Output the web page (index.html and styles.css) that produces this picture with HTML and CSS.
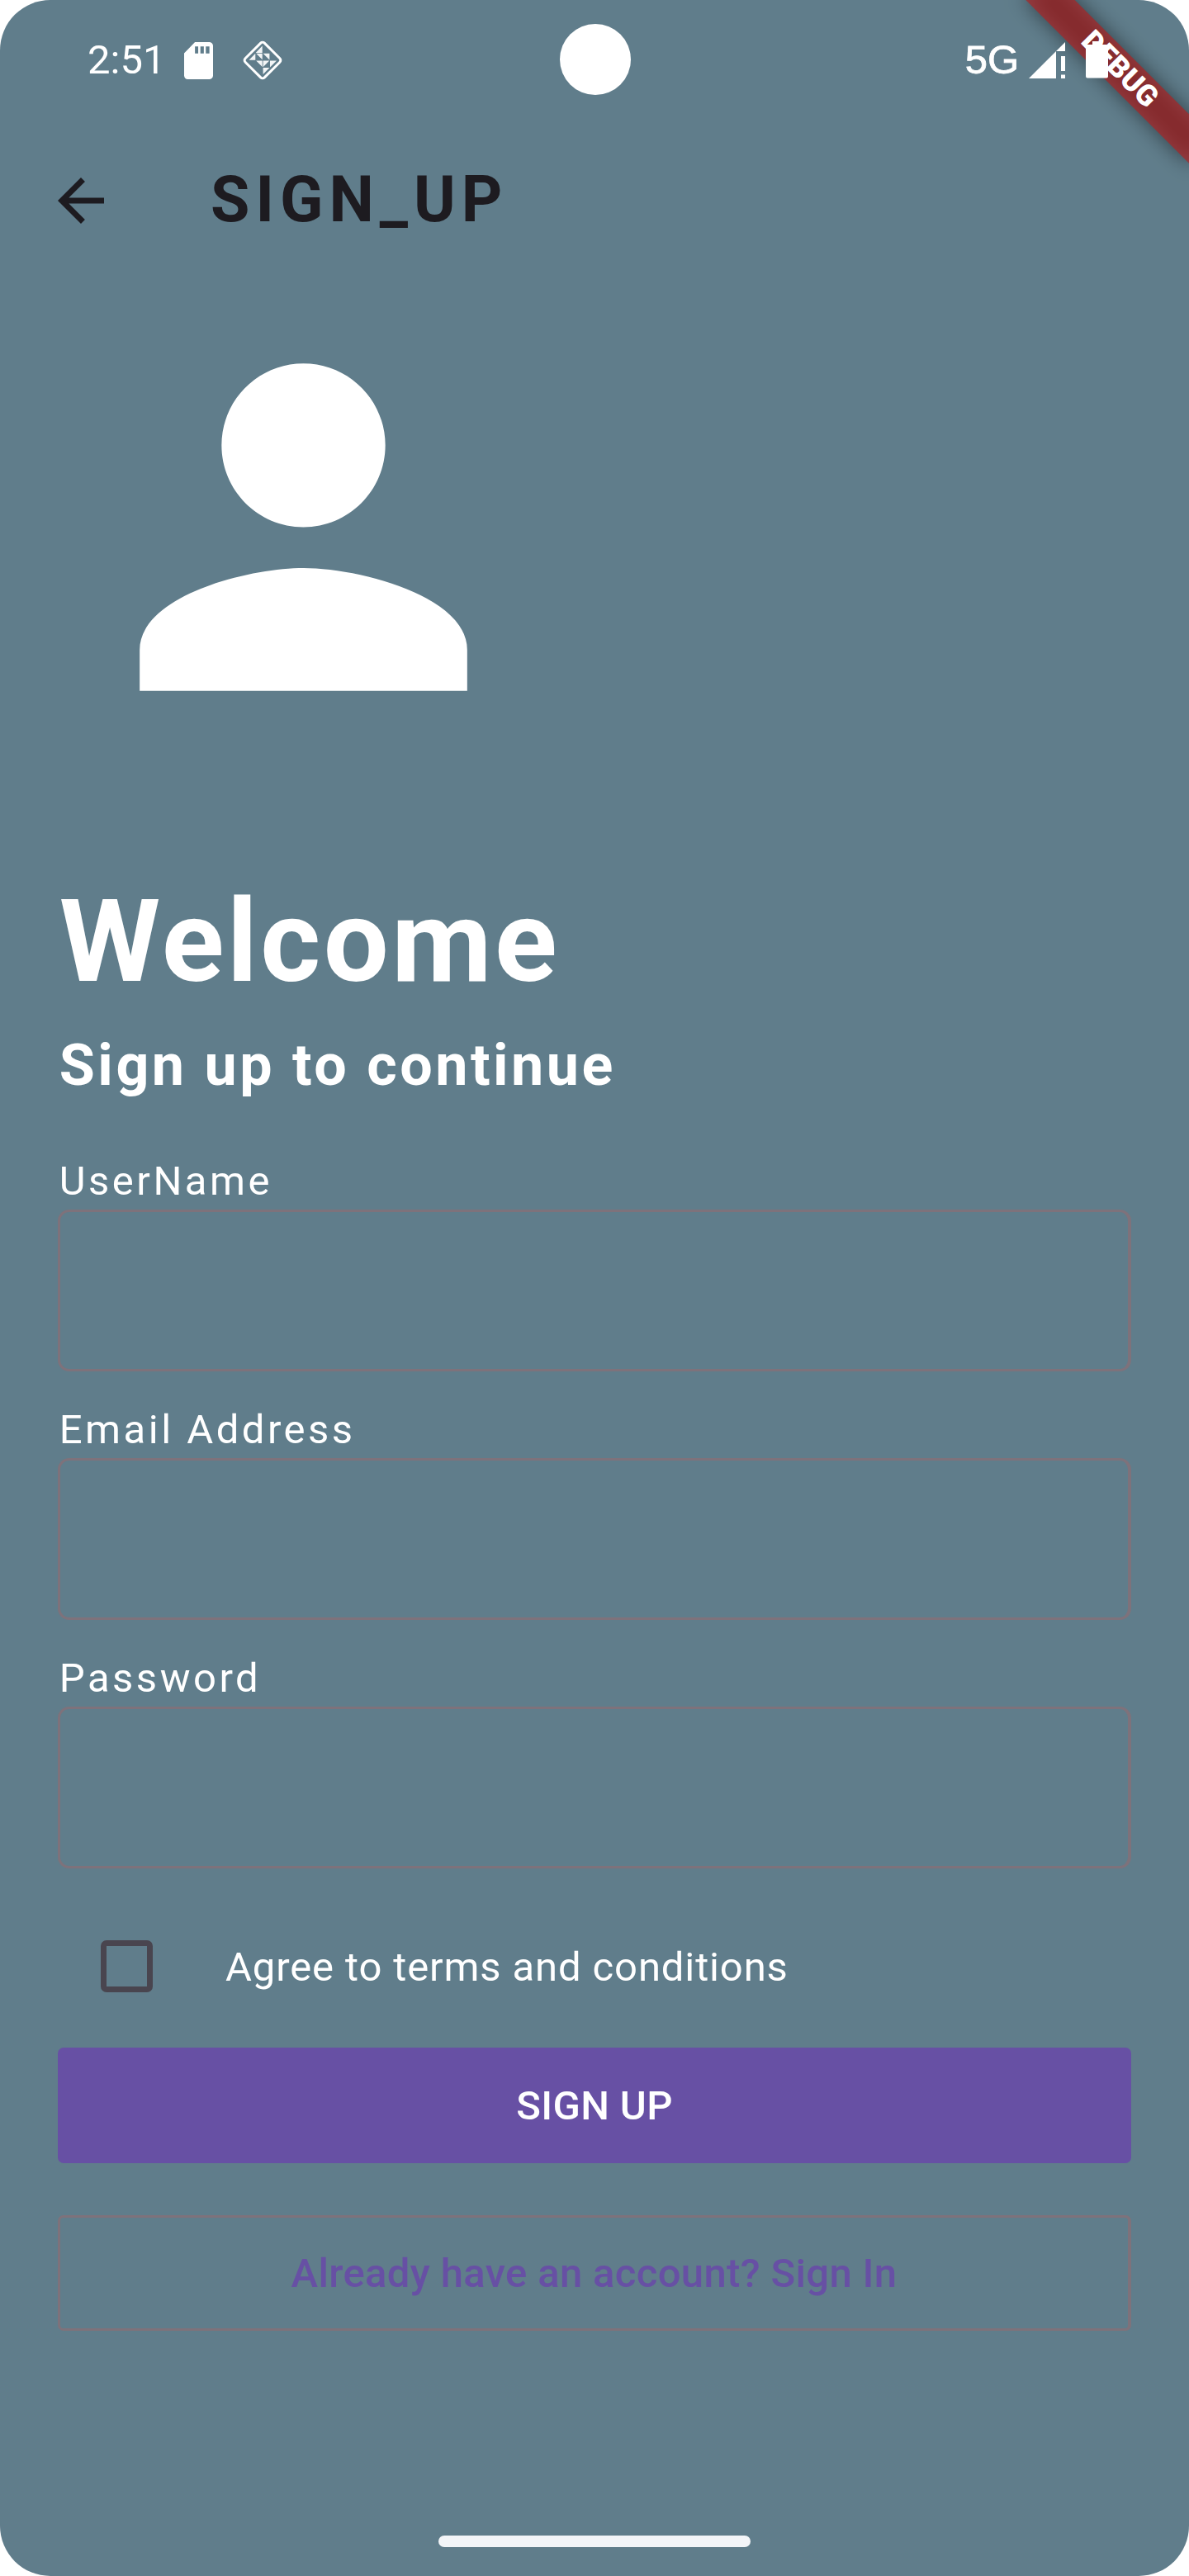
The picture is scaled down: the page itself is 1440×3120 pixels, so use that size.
FILE: index.html
```html
<!DOCTYPE html>
<html lang="en">
<head>
<meta charset="utf-8">
<title>Sign up</title>
<link rel="stylesheet" href="styles.css">
</head>
<body>
<div class="screen">
  <div class="debug-banner"><span class="debug-text">DEBUG</span></div>
  <div class="camera"></div>

  <div class="status-bar">
    <span class="clock">2:51</span>
    <svg class="sd-card" viewBox="4 2 16 20" preserveAspectRatio="none" fill="#fff"><path d="M18 2h-8L4 8v12c0 1.100.900 2 2 2h12c1.100 0 2-.900 2-2V4c0-1.100-.900-2-2-2zm-6.200 6.100H10V4.300h1.800zm3.100 0h-1.900V4.300h1.900zm3.100 0h-2V4.300h2z"/></svg>
    <svg class="diamond" viewBox="0 0 50 50">
      <rect x="8.600" y="8.600" width="32.800" height="32.800" rx="3.200" transform="rotate(45 25 25)" fill="none" stroke="#fff" stroke-width="3"/>
      <path fill="#fff" fill-opacity=".920" d="M24.700 7.500V16h-8zM8.500 24.700l7.800-8v8zM17.200 16.700h7.500v7.500zM25.600 16.700h7.800v7.800zM17.200 25.600h7.500v7.500zM25.600 33.200v-7.600h7.600zM34 25.600h8l-8 7.800zM25.600 34h7.800l-7.800 8z"/>
    </svg>
    <span class="network">5G</span>
    <svg class="signal" viewBox="0 0 44 44" fill="#fff"><path d="M0 44 33 11V44zM33 11 44 0v11zM39 17h5v18h-5zM39 39.500h5V44h-5z"/></svg>
    <svg class="battery" viewBox="0 0 27 45" fill="#fff"><path d="M8 0h11v4h6q2 0 2 2v36.500q0 2-2 2H2q-2 0-2-2V6q0-2 2-2h6z"/></svg>
  </div>

  <header class="app-bar">
    <svg class="back" viewBox="0 0 24 24" fill="#1d1b20"><path d="M20 11H7.830l5.590-5.590L12 4l-8 8 8 8 1.410-1.410L7.830 13H20v-2z"/></svg>
    <h1 class="title">SIGN_UP</h1>
  </header>

  <main class="content">
    <svg class="avatar" viewBox="0 0 24 24" fill="#fff"><path d="M12 12c2.210 0 4-1.790 4-4s-1.790-4-4-4-4 1.790-4 4 1.790 4 4 4zm0 2c-2.670 0-8 1.340-8 4v2h16v-2c0-2.660-5.330-4-8-4z"/></svg>
    <h2 class="welcome">Welcome</h2>
    <p class="subtitle">Sign up to continue</p>

    <form class="form">
      <label class="field"><span class="label">UserName</span><input class="input" type="text"></label>
      <label class="field"><span class="label">Email Address</span><input class="input" type="email"></label>
      <label class="field"><span class="label">Password</span><input class="input" type="password"></label>
      <label class="terms"><input class="checkbox" type="checkbox"><span class="terms-text">Agree to terms and conditions</span></label>
      <button class="btn btn-filled" type="button">SIGN UP</button>
      <button class="btn btn-outlined" type="button">Already have an account? Sign In</button>
    </form>
  </main>

  <div class="home-bar"></div>
</div>
</body>
</html>
```
FILE: styles.css
```css
* {
  box-sizing: border-box;
}

body {
  margin: 0;
  background: #fff;
  font-family: Roboto, sans-serif;
}

svg {
  display: block;
  flex: none;
}

.screen {
  position: relative;
  display: flex;
  flex-direction: column;
  width: 1440px;
  height: 3120px;
  overflow: hidden;
  border-radius: 61px;
  background: #607d8b;
  color: #fff;
}

/* Status bar */
.status-bar {
  position: relative;
  display: flex;
  align-items: center;
  height: 145px;
  padding: 0 98px 0 106px;
  font-size: 49px;
  line-height: 57px;
}

.clock {
  width: 95px;
}

.sd-card {
  width: 35px;
  height: 45px;
  margin: 1px 0 0 22px;
}

.diamond {
  width: 50px;
  height: 50px;
  margin: 1px 0 0 34.5px;
}

.network {
  margin-left: auto;
  font-family: "Liberation Sans", sans-serif;
  -webkit-text-stroke: 0.8px #fff;
}

.signal {
  width: 44px;
  height: 44px;
  margin: 1px 0 0 12px;
}

.battery {
  width: 27px;
  height: 45px;
  margin-left: 25px;
}

.camera {
  position: absolute;
  top: 29px;
  left: 677.5px;
  width: 86px;
  height: 86px;
  border-radius: 50%;
  background: #fff;
}

/* Diagonal corner ribbon */
.debug-banner {
  position: absolute;
  top: 62.75px;
  left: 1216.25px;
  width: 280px;
  height: 42px;
  transform: rotate(45deg);
  text-align: center;
}

.debug-banner::before,
.debug-banner::after {
  content: "";
  position: absolute;
  inset: 0;
}

.debug-banner::before {
  background: rgba(0, 0, 0, 0.5);
  filter: blur(12.6px);
}

.debug-banner::after {
  background: rgba(183, 28, 28, 0.627);
}

.debug-text {
  position: relative;
  z-index: 1;
  display: block;
  font-size: 35.7px;
  font-weight: 900;
  line-height: 41px;
}

/* App bar */
.app-bar {
  display: flex;
  align-items: center;
  gap: 115px;
  height: 196px;
  padding-left: 56px;
}

.back {
  width: 84px;
  height: 84px;
}

.title {
  margin: 0;
  padding-bottom: 2px;
  color: #1d1b20;
  font-size: 77px;
  line-height: 90px;
  letter-spacing: 7px;
}

/* Content */
.content {
  display: flex;
  flex-direction: column;
  padding: 0 70px;
}

.avatar {
  width: 595px;
  height: 595px;
}

.welcome,
.subtitle,
.label {
  padding-left: 1.75px;
  letter-spacing: 3.5px;
}

.welcome {
  margin: 122px 0 0;
  font-size: 140px;
  line-height: 164px;
}

.subtitle {
  margin: 27px 0 0;
  font-size: 70px;
  font-weight: 700;
  line-height: 82px;
}

.form {
  display: flex;
  flex-direction: column;
  margin-top: 71px;
}

.field {
  display: flex;
  flex-direction: column;
  gap: 6px;
  margin-bottom: 42px;
}

.label {
  font-size: 49px;
  line-height: 57px;
}

.input {
  width: 100%;
  height: 196px;
  margin: 0;
  padding: 0 42px;
  border: 3px solid #7e727b;
  border-right-width: 4px;
  border-radius: 14px;
  background: transparent;
  color: #fff;
  font: 49px Roboto, sans-serif;
}

.terms {
  display: flex;
  align-items: center;
  gap: 88px;
  height: 63px;
  margin: 45px 0 67px 52px;
}

.checkbox {
  appearance: none;
  width: 63px;
  height: 63px;
  margin: 0;
  border: 7px solid #49454f;
  border-radius: 7px;
}

.terms-text {
  padding-top: 2px;
  font-size: 49px;
  line-height: 57px;
  letter-spacing: 0.875px;
}

.btn {
  height: 140px;
  padding: 0;
  border: 0;
  border-radius: 7px;
  font: 500 49px/141px Roboto, sans-serif;
  letter-spacing: 0.35px;
}

.btn-filled {
  background: #6750a4;
  color: #fff;
}

.btn-outlined {
  margin-top: 63px;
  border: 3px solid #7e727b;
  border-right-width: 4px;
  background: transparent;
  color: #6750a4;
  line-height: 135px;
}

/* Gesture navigation handle */
.home-bar {
  align-self: center;
  width: 378px;
  height: 14px;
  margin: auto 0 35px;
  border-radius: 7px;
  background: #f3f5f8;
}
```
